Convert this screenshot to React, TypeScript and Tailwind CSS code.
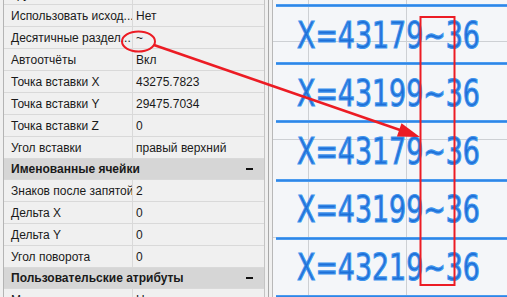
const rows1 = [
  ["Использовать исход...", "Нет"],
  ["Десятичные раздел...", "~"],
  ["Автоотчёты", "Вкл"],
  ["Точка вставки X", "43275.7823"],
  ["Точка вставки Y", "29475.7034"],
  ["Точка вставки Z", "0"],
  ["Угол вставки", "правый верхний"],
];

const rows2 = [
  ["Знаков после запятой", "2"],
  ["Дельта X", "0"],
  ["Дельта Y", "0"],
  ["Угол поворота", "0"],
];

const labels = ["X=43179~36", "X=43199~36", "X=43179~36", "X=43199~36", "X=43219~36"];

const Row = ({ label, value }: { label: string; value: string }) => (
  <div className="flex h-[22px] border-b border-[#d9d9d9] text-[12px] text-[#1a1a1a]">
    <div className="w-[129px] shrink-0 border-r border-[#d9d9d9] pl-[7px] flex items-center whitespace-nowrap overflow-hidden">
      {label}
    </div>
    <div className="flex-1 pl-[3px] flex items-center whitespace-nowrap">{value}</div>
  </div>
);

const Header = ({ title }: { title: string }) => (
  <div className="flex h-[21px] items-center justify-between bg-[#d6d6d6] border-b border-[#d9d9d9] pl-[7px] pr-[11px] text-[12px] font-bold text-[#1a1a1a]">
    <span>{title}</span>
    <span className="w-[7px] h-[2px] bg-[#111]" />
  </div>
);

export default function App() {
  return (
    <div
      className="relative flex w-[507px] h-[297px] overflow-hidden bg-[#f0f0f0]"
      style={{ fontFamily: '"Liberation Sans", Arial, sans-serif' }}
    >
      {/* properties panel */}
      <div className="flex w-[265px] shrink-0 border-r border-[#c4c4c4]">
        <div className="w-[4px] shrink-0 border-r border-[#b4b4b4]" />
        <div className="flex-1 -mt-[17px]">
          <Row label="Группа" value="" />
          {rows1.map(([l, v]) => (
            <Row key={l} label={l} value={v} />
          ))}
          <Header title="Именованные ячейки" />
          {rows2.map(([l, v]) => (
            <Row key={l} label={l} value={v} />
          ))}
          <Header title="Пользовательские атрибуты" />
          <Row label="Метка" value="Нет" />
        </div>
      </div>

      {/* splitter */}
      <div className="w-[4px] shrink-0 border-r border-[#a8a8a8]" />
      <div className="w-[4px] shrink-0 border-r border-[#b8b8b8]" />

      {/* drawing canvas */}
      <div className="relative flex-1 bg-[#f4f6f9] pt-[4px] pl-[3px] overflow-hidden">
        <div className="absolute left-[35px] top-0 h-full w-px bg-[#cdd0d4]" />
        <div className="absolute left-[133px] top-0 h-full w-px bg-[#cdd0d4]" />
        <div className="absolute left-0 top-[41px] w-full h-px bg-[#cdd0d4]" />
        <div className="absolute left-0 top-[139px] w-full h-px bg-[#cdd0d4]" />
        <div className="absolute left-0 top-[237px] w-full h-px bg-[#cdd0d4]" />

        <div className="relative">
          {labels.map((t, i) => (
            <div key={i}>
              <div className="h-[3px] bg-[#2f86e6] border-y border-[#4b9bef]" />
              <div className="h-[55.2px] flex items-center pl-[21px]">
                <span
                  className="origin-left scale-x-[0.785] text-[38px] leading-none text-[#1f6fd6] whitespace-nowrap [-webkit-text-stroke:1.2px_#3f95ee]"
                  style={{ fontFamily: '"DejaVu Sans Condensed", "DejaVu Sans", sans-serif' }}
                >
                  {t}
                </span>
              </div>
            </div>
          ))}
          <div className="h-[3px] bg-[#2f86e6] border-y border-[#4b9bef]" />
        </div>
      </div>

      {/* red annotations */}
      <svg className="absolute inset-0 pointer-events-none" width="507" height="297">
        <ellipse cx="138.5" cy="41.5" rx="16.5" ry="10" fill="none" stroke="#ec1c24" strokeWidth="2" />
        <line x1="154" y1="45" x2="400" y2="130" stroke="#ec1c24" strokeWidth="2.5" />
        <polygon points="420,137 396.9,136.4 401.5,123.2" fill="#ec1c24" />
        <rect x="420.5" y="17" width="34" height="268" fill="none" stroke="#ec1c24" strokeWidth="2" />
      </svg>
    </div>
  );
}
